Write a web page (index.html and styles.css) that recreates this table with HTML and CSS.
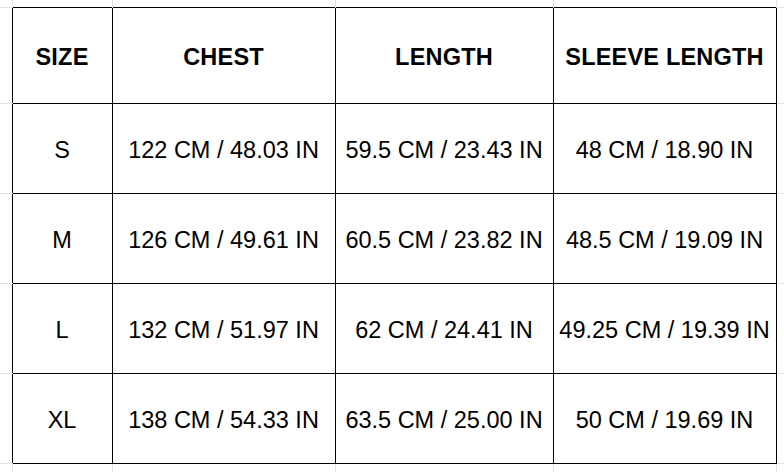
FILE: index.html
```html
<!DOCTYPE html>
<html>
<head>
<meta charset="utf-8">
<link rel="stylesheet" href="styles.css">
</head>
<body>
<table class="sheet">
  <colgroup>
    <col class="c-edge">
    <col class="c-size">
    <col class="c-wide">
    <col class="c-mid">
    <col class="c-wide">
    <col class="c-rest">
  </colgroup>
  <tr class="r-top">
    <td class="g-corner"></td>
    <td class="g-top"></td>
    <td class="g-top"></td>
    <td class="g-top"></td>
    <td class="g-top"></td>
    <td class="g-corner-r"></td>
  </tr>
  <tr class="r-head">
    <td class="g-left"></td>
    <th class="cell">SIZE</th>
    <th class="cell">CHEST</th>
    <th class="cell">LENGTH</th>
    <th class="cell">SLEEVE LENGTH</th>
    <td class="g-right"></td>
  </tr>
  <tr class="r-body">
    <td class="g-left"></td>
    <td class="cell">S</td>
    <td class="cell">122 CM / 48.03 IN</td>
    <td class="cell">59.5 CM / 23.43 IN</td>
    <td class="cell">48 CM / 18.90 IN</td>
    <td class="g-right"></td>
  </tr>
  <tr class="r-body">
    <td class="g-left"></td>
    <td class="cell">M</td>
    <td class="cell">126 CM / 49.61 IN</td>
    <td class="cell">60.5 CM / 23.82 IN</td>
    <td class="cell">48.5 CM / 19.09 IN</td>
    <td class="g-right"></td>
  </tr>
  <tr class="r-body">
    <td class="g-left"></td>
    <td class="cell">L</td>
    <td class="cell">132 CM / 51.97 IN</td>
    <td class="cell">62 CM / 24.41 IN</td>
    <td class="cell">49.25 CM / 19.39 IN</td>
    <td class="g-right"></td>
  </tr>
  <tr class="r-body">
    <td class="g-left"></td>
    <td class="cell">XL</td>
    <td class="cell">138 CM / 54.33 IN</td>
    <td class="cell">63.5 CM / 25.00 IN</td>
    <td class="cell">50 CM / 19.69 IN</td>
    <td class="g-right"></td>
  </tr>
  <tr class="r-bottom">
    <td class="g-bl"></td>
    <td class="g-bottom"></td>
    <td class="g-bottom"></td>
    <td class="g-bottom"></td>
    <td class="g-bottom"></td>
    <td class="g-br"></td>
  </tr>
</table>
</body>
</html>
```

FILE: styles.css
```css
html, body {
  margin: 0;
  padding: 0;
  background: #ffffff;
}

.sheet {
  border-collapse: collapse;
  table-layout: fixed;
  width: 784px;
  font-family: "Liberation Sans", Arial, sans-serif;
  font-size: 23.5px;
  color: #000000;
}

.c-edge { width: 12px; }
.c-size { width: 100px; }
.c-wide { width: 223px; }
.c-mid { width: 218px; }
.c-rest { width: 8px; }

.r-top { height: 7px; }
.r-head { height: 96px; }
.r-body { height: 90px; }
.r-bottom { height: 9px; }

td, th {
  padding: 0;
}

.cell {
  border: 1px solid #000000;
  text-align: center;
  vertical-align: middle;
  padding-top: 4px;
  white-space: nowrap;
  overflow: visible;
}

th.cell {
  font-weight: bold;
  letter-spacing: 0.2px;
}

.g-corner {
  border-right: 1px solid #e2e2e2;
  border-bottom: 1px solid #e2e2e2;
}
.g-top {
  border-right: 1px solid #e2e2e2;
}
.g-corner-r {
  border-bottom: 1px solid #e2e2e2;
}
.g-left,
.g-right {
  border-bottom: 1px solid #e2e2e2;
}
.g-bl,
.g-bottom {
  border-right: 1px solid #e2e2e2;
}
```
